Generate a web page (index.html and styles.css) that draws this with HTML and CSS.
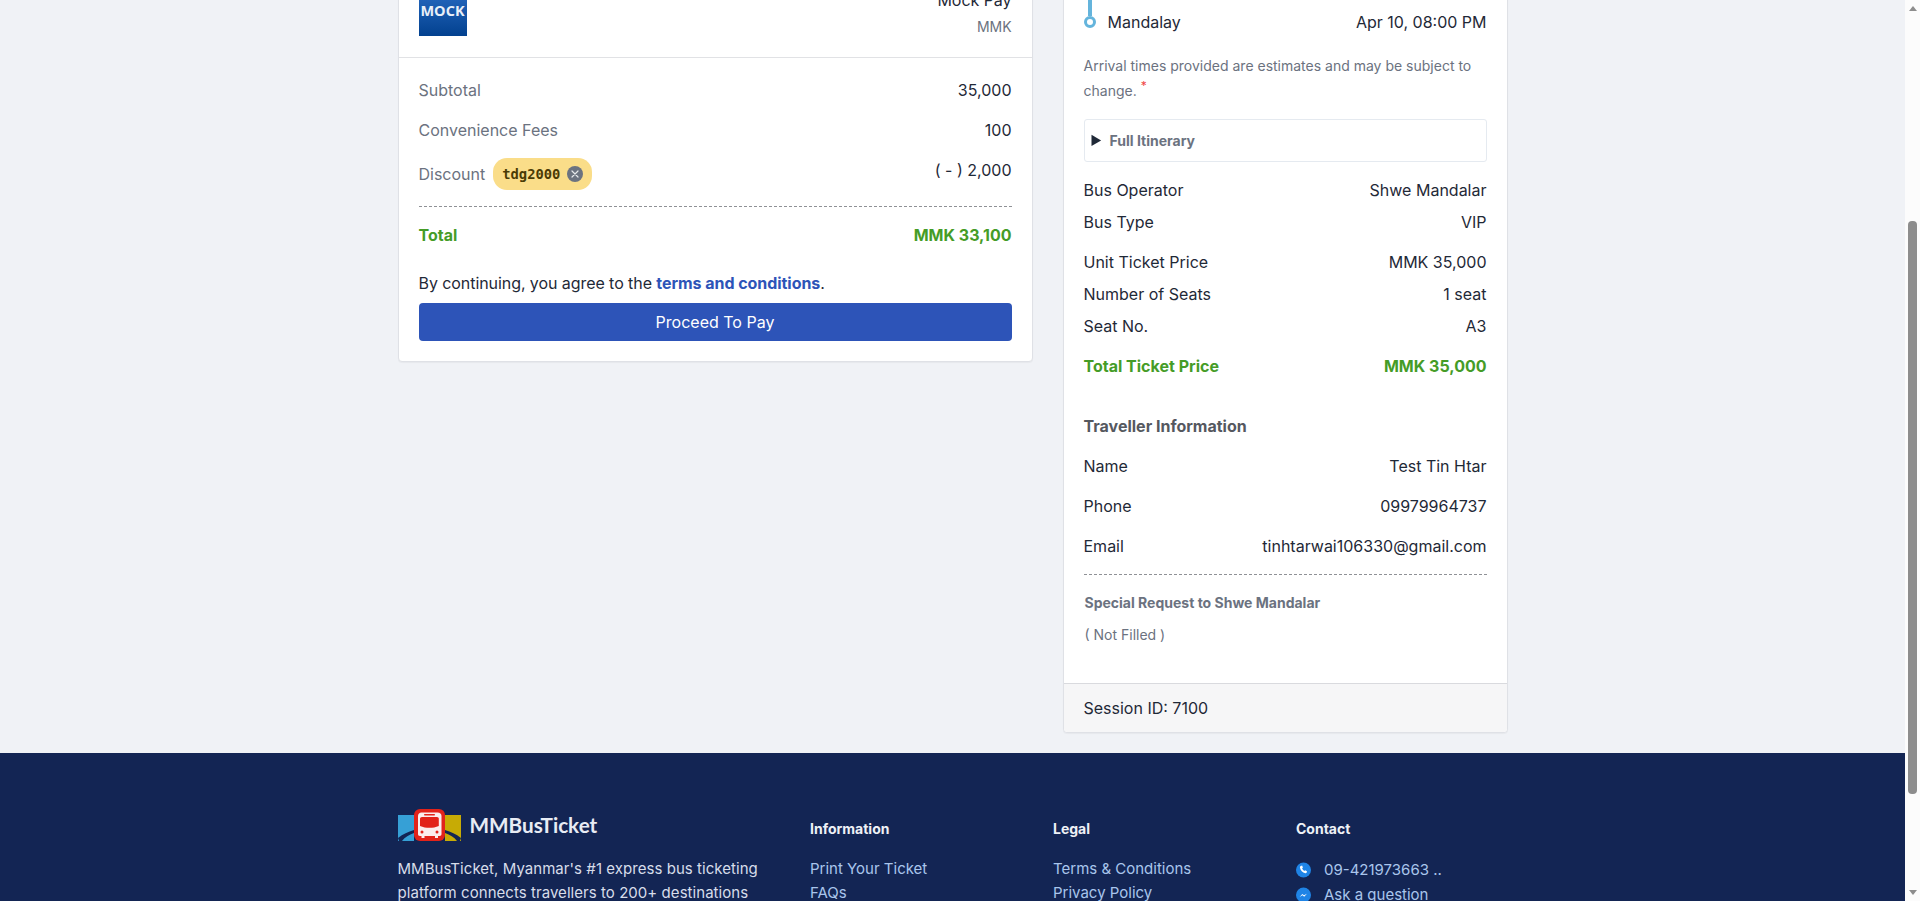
FILE: index.html
```html
<!DOCTYPE html>
<html lang="en">
<head>
<meta charset="utf-8">
<title>MMBusTicket - Checkout</title>
<link rel="stylesheet" href="styles.css">
</head>
<body>
<div class="window">
  <div class="viewport">
    <div class="page">
      <main class="checkout">
        <section class="card pay-card">
          <div class="method">
            <div class="mock-logo">MOCK</div>
            <div class="method-info">
              <div class="method-name">Mock Pay</div>
              <div class="method-cur">MMK</div>
            </div>
          </div>
          <div class="summary">
            <div class="sum-row"><span class="muted">Subtotal</span><span>35,000</span></div>
            <div class="sum-row"><span class="muted">Convenience Fees</span><span>100</span></div>
            <div class="sum-row discount">
              <div class="discount-label">
                <span class="muted">Discount</span>
                <span class="coupon">
                  <code class="coupon-code">tdg2000</code>
                  <svg class="coupon-x" viewBox="0 0 16 16" aria-hidden="true"><circle cx="8" cy="8" r="8" fill="#6b7280"/><path d="M5 5l6 6M11 5l-6 6" stroke="#e5e7eb" stroke-width="1.2" stroke-linecap="round"/></svg>
                </span>
              </div>
              <span>( - ) 2,000</span>
            </div>
            <div class="sum-row total"><span>Total</span><span>MMK 33,100</span></div>
            <p class="agree"><span class="agree-lead">By continuing, you agree to the </span><a class="terms" href="#"><b>terms and conditions</b></a>.</p>
            <button class="pay-btn" type="button">Proceed To Pay</button>
          </div>
        </section>

        <aside class="card trip-card">
          <div class="trip-body">
            <div class="stop">
              <span class="mark"><span class="line full"></span></span>
              <span class="stop-name">Yangon</span>
              <span class="stop-time">Apr 10, 06:00 AM</span>
            </div>
            <div class="stop">
              <span class="mark end"><span class="line short"></span><span class="dot"></span></span>
              <span class="stop-name">Mandalay</span>
              <span class="stop-time">Apr 10, 08:00 PM</span>
            </div>
            <p class="note">Arrival times provided are estimates and may be subject to change. <sup class="req">*</sup></p>
            <details class="itinerary">
              <summary><span class="itinerary-label">Full Itinerary</span></summary>
            </details>
            <div class="rows first">
              <div class="row"><span>Bus Operator</span><span>Shwe Mandalar</span></div>
              <div class="row"><span>Bus Type</span><span>VIP</span></div>
            </div>
            <div class="rows second">
              <div class="row"><span>Unit Ticket Price</span><span>MMK 35,000</span></div>
              <div class="row"><span>Number of Seats</span><span>1 seat</span></div>
              <div class="row"><span>Seat No.</span><span>A3</span></div>
            </div>
            <div class="row ticket-total"><span>Total Ticket Price</span><span>MMK 35,000</span></div>
            <h3 class="traveller-title">Traveller Information</h3>
            <div class="row tall"><span>Name</span><span>Test Tin Htar</span></div>
            <div class="row tall"><span>Phone</span><span>09979964737</span></div>
            <div class="row tall"><span>Email</span><span>tinhtarwai106330@gmail.com</span></div>
            <div class="request">
              <h4 class="request-title">Special Request to Shwe Mandalar</h4>
              <p class="request-text">( Not Filled )</p>
            </div>
          </div>
          <div class="session">Session ID: 7100</div>
        </aside>
      </main>

      <footer class="footer">
        <div class="footer-grid">
          <div class="brand-col">
            <div class="brand">
              <svg class="brand-logo" viewBox="0 0 63 32" aria-hidden="true">
                <path d="M0 6h16v26H0z" fill="#36a0d6"/>
                <path d="M47 6h16v26H47z" fill="#c7ab05"/>
                <path d="M0 29c5-4 10-6 16-8v3c-5 2-9 4-12 8H1z" fill="#132554"/>
                <path d="M63 29c-5-4-10-6-16-8v3c5 2 9 4 12 8h3z" fill="#132554"/>
                <rect x="16" y="0" width="31" height="32" rx="6" fill="#e2231a"/>
                <path d="M23.500 3.500h16c2.500 0 4 1.500 4 3.500v18c0 1.200-.6 2-2 2h-1.500v2h-3v-2H26.500v2h-3v-2H22c-1.400 0-2-.8-2-2V7c0-2 1.500-3.500 3.500-3.500z" fill="#fbeeee"/>
                <path d="M24 8h15c1 0 1.800.7 1.800 1.800V17c-3 1.300-6 1.800-9.300 1.800S25 18.300 22 17V9.800C22 8.700 23 8 24 8z" fill="#e2231a"/>
                <rect x="26" y="5" width="11" height="1.400" rx=".7" fill="#e2231a"/>
                <circle cx="24" cy="23" r="1.500" fill="#e2231a"/>
                <circle cx="39" cy="23" r="1.500" fill="#e2231a"/>
              </svg>
              <span class="brand-name">MMBusTicket</span>
            </div>
            <p class="brand-text">MMBusTicket, Myanmar's #1 express bus ticketing platform connects travellers to 200+ destinations</p>
          </div>
          <nav class="foot-col">
            <h5 class="foot-title">Information</h5>
            <a class="foot-link" href="#">Print Your Ticket</a>
            <a class="foot-link" href="#">FAQs</a>
          </nav>
          <nav class="foot-col">
            <h5 class="foot-title">Legal</h5>
            <a class="foot-link" href="#">Terms &amp; Conditions</a>
            <a class="foot-link" href="#">Privacy Policy</a>
          </nav>
          <div class="foot-col">
            <h5 class="foot-title">Contact</h5>
            <a class="contact" href="#">
              <svg class="contact-icon" viewBox="0 0 16 16" aria-hidden="true"><circle cx="8" cy="8" r="8" fill="#1f84e6"/><path d="M5.200 3.600l1.300-.3.900 2.100-.9.800c.4 1.200 1.200 2.200 2.300 2.900l.9-.8 2 1-.3 1.400c-.2.600-.8.900-1.400.8C7 10.900 4.600 8.400 4.200 5.300c-.1-.8.400-1.500 1-1.700z" fill="#fff"/></svg>
              <span>09-421973663 ..</span>
            </a>
            <a class="contact" href="#">
              <svg class="contact-icon" viewBox="0 0 16 16" aria-hidden="true"><circle cx="8" cy="8" r="8" fill="#1f84e6"/><path d="M3.800 10l3-3.200 1.700 1.500 3.200-1.700-3 3.200-1.700-1.500z" fill="#fff"/></svg>
              <span>Ask a question</span>
            </a>
          </div>
        </div>
      </footer>
    </div>
  </div>
  <div class="scrollbar" aria-hidden="true">
    <span class="arrow up"></span>
    <span class="thumb"></span>
    <span class="arrow down"></span>
  </div>
</div>
</body>
</html>
```

FILE: styles.css
```css
* { box-sizing: border-box; }
html, body { margin: 0; height: 901px; overflow: hidden; }
body { font-family: Inter, "Liberation Sans", sans-serif; font-size: 16px; color: #1f2937; background: #f0f2f6; }
p, h3, h4, h5 { margin: 0; }
a { text-decoration: none; color: inherit; }

.window { display: flex; height: 901px; }
.viewport { flex: 1; min-width: 0; overflow: hidden; }
.page { margin-top: -33px; }

.checkout { width: 1110px; margin: 0 auto; display: grid; grid-template-columns: 635px 445px; column-gap: 30px; align-items: start; padding-bottom: 20px; }
.card { background: #fff; border: 1px solid #dfe1e6; border-radius: 4px; box-shadow: 0 1px 1px rgba(0,0,0,.04); }

/* payment */
.method { display: flex; justify-content: space-between; padding: 20px; border-bottom: 1px solid #e1e2e5; height: 90px; }
.mock-logo { width: 48px; height: 48px; padding-top: 12.500px; background: linear-gradient(#2a6cc4, #02418f); color: #e8eff8; font: 700 14.500px/20px "Open Sans", sans-serif; text-align: center; }
.method-info { text-align: right; margin-top: -3px; letter-spacing: -.05px; }
.method-name { line-height: 30px; }
.method-cur { font-size: 14px; line-height: 24px; color: #6b7280; }

.summary { padding: 12px 20px 20px; }
.sum-row { display: flex; justify-content: space-between; line-height: 40px; height: 40px; }
.muted { color: #6b7280; }
.discount { height: 57px; border-bottom: 1px dashed #8f9196; }
.discount-label { display: flex; align-items: center; gap: 8px; height: 32px; margin-top: 8px; line-height: 32px; }
.coupon { display: flex; align-items: center; justify-content: space-between; width: 99px; height: 32px; padding: 0 9px; border-radius: 14px; background: #fadd89; }
.coupon-code { font: 700 13.800px/32px "DejaVu Sans Mono", monospace; color: #4a3b05; }
.coupon-x { width: 16px; height: 16px; }
.total { margin-top: 8px; font-weight: 700; color: #459c27; }
.agree { margin-top: 16px; line-height: 24px; height: 24px; }
.agree-lead { letter-spacing: -.07px; }
.terms { color: #2d54b8; }
.terms b { font-weight: 700; letter-spacing: -.05px; }
.pay-btn { display: block; width: 100%; height: 38px; margin-top: 8px; border: 0; border-radius: 4px; background: #2d54b8; color: #fff; font: 400 16px/37px Inter, sans-serif; }

/* trip */
.trip-body { padding: 6px 20px 36px; }
.stop { display: flex; align-items: center; height: 32px; }
.mark { width: 12px; height: 32px; margin-right: 12px; display: flex; flex-direction: column; align-items: center; }
.mark.end { height: 22px; align-self: flex-start; }
.line { width: 4px; background: #64b4dc; }
.line.full { height: 32px; }
.line.short { height: 10px; }
.dot { width: 12px; height: 12px; border: 3px solid #64b4dc; border-radius: 50%; background: #fff; }
.stop-name { flex: 1; }
.note { margin-top: 15px; font-size: 14px; line-height: 25px; color: #6b7280; }
.req { color: #ef4444; font-size: 12px; line-height: 0; }
.itinerary { margin-top: 16px; height: 43px; border: 1px solid #e5eaf0; border-radius: 3px; }
.itinerary summary { padding: 0 7px; line-height: 41px; font-size: 14px; font-weight: 700; color: #1f2937; }
.itinerary summary::marker { font-size: 17px; }
.itinerary-label { color: #6b7280; }
.rows.first { margin-top: 12px; margin-bottom: 8px; }
.row { display: flex; justify-content: space-between; height: 32px; line-height: 32px; }
.ticket-total { margin-top: 8px; font-weight: 700; color: #459c27; }
.traveller-title { margin-top: 24px; height: 40px; line-height: 40px; font-size: 16px; font-weight: 700; color: #55585f; }
.row.tall { height: 40px; line-height: 40px; }
.request { margin-top: 8px; border-top: 1px dashed #8f9196; padding-left: 1px; }
.request-title { margin-top: 15px; height: 25px; line-height: 25px; font-size: 14px; font-weight: 700; color: #6b7280; }
.request-text { margin-top: 7px; line-height: 25px; font-size: 14px; color: #6b7280; }
.session { height: 49px; line-height: 48px; padding: 0 20px; background: #f6f6f7; border-top: 1px solid #d9dade; border-radius: 0 0 4px 4px; }

/* footer */
.footer { background: #132554; padding-top: 56px; height: 300px; }
.footer-grid { width: 1110px; margin: 0 auto; display: grid; grid-template-columns: 412.500px 243px 243px 1fr; }
.brand { display: flex; align-items: center; gap: 9px; height: 32px; margin-bottom: 16px; }
.brand-logo { width: 63px; height: 32px; flex: none; }
.brand-name { font: 700 20.700px/32px Lato, sans-serif; color: #e8ecf4; }
.brand-text { width: 380px; font-size: 15px; line-height: 24px; letter-spacing: .05px; color: #d7ddea; }
.foot-col { display: flex; flex-direction: column; }
.foot-title { height: 48px; line-height: 40px; font-size: 14px; font-weight: 700; color: #eef1f6; }
.foot-link { height: 24px; line-height: 24px; font-size: 15px; color: #a9c5ec; }
.contact { display: flex; align-items: center; gap: 13px; height: 25px; font-size: 15px; color: #a9c5ec; }
.contact-icon { width: 15px; height: 16px; flex: none; }

/* window scrollbar */
.scrollbar { flex: none; width: 15px; background: #fcfcfc; display: flex; flex-direction: column; align-items: center; }
.arrow { width: 0; height: 0; border-left: 4.500px solid transparent; border-right: 4.500px solid transparent; }
.arrow.up { margin-top: 6px; border-bottom: 5px solid #8d8d8d; }
.arrow.down { margin-top: 96px; border-top: 5px solid #8d8d8d; }
.thumb { width: 9px; height: 573px; margin-top: 210px; border-radius: 4px; background: #8d8d8d; }
```
